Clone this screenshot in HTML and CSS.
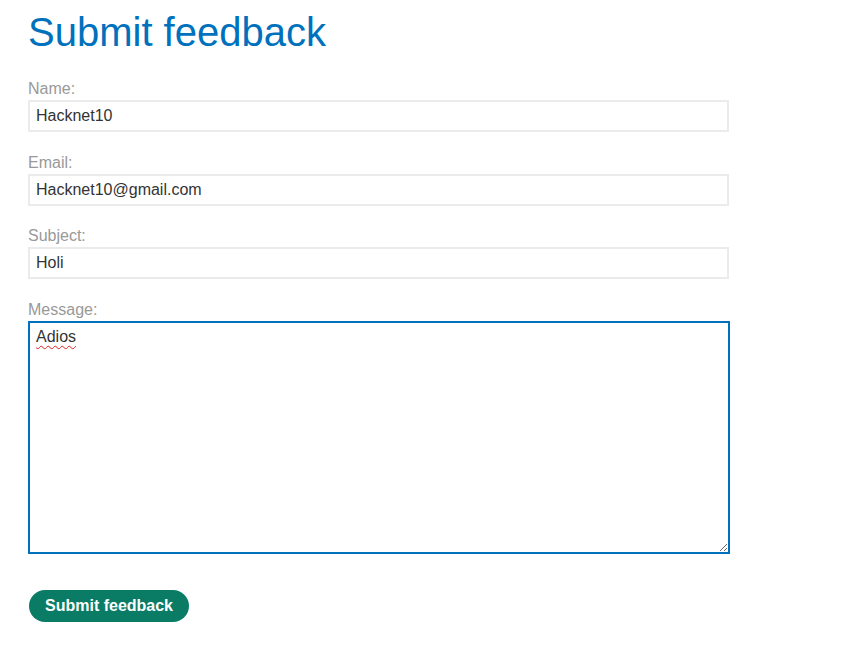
FILE: index.html
```html
<!DOCTYPE html>
<html lang="en">
<head>
    <meta charset="UTF-8">
    <meta name="viewport" content="width=device-width, initial-scale=1.0">
    <title>Submit feedback</title>
    <link rel="stylesheet" href="styles.css">
</head>
<body>

    <div class="container">
        <h1>Submit feedback</h1>
        <form class="feedback-form">
            <label for="name">Name:</label>
            <input type="text" id="name" value="Hacknet10">

            <label for="email">Email:</label>
            <input type="text" id="email" value="Hacknet10@gmail.com">

            <label for="subject">Subject:</label>
            <input type="text" id="subject" value="Holi">

            <label for="message">Message:</label>
            <textarea id="message" spellcheck="false">Adios</textarea>

            <button type="button" class="submit-btn">Submit feedback</button>
        </form>
    </div>

</body>
</html>
```

FILE: styles.css
```css
* {
    margin: 0;
    padding: 0;
    box-sizing: border-box;
    font-family: "Liberation Sans", Arial, sans-serif;
}

body {
    background: #ffffff;
    color: #333;
}

.container {
    padding: 8px 0 0 28px;
}

h1 {
    font-size: 40px;
    font-weight: normal;
    line-height: 48px;
    color: #0071bc;
    margin-bottom: 22px;
}

.feedback-form {
    display: flex;
    flex-direction: column;
    align-items: flex-start;
}

.feedback-form label {
    font-size: 16px;
    line-height: 22px;
    color: #999;
}

.feedback-form input {
    width: 701px;
    height: 32px;
    padding: 0 6px;
    border: 2px solid #ebebeb;
    font-size: 16px;
    color: #333;
    outline: none;
    margin-bottom: 19.5px;
}

.feedback-form textarea {
    width: 702px;
    height: 233px;
    padding: 5px 6px;
    border: 2px solid #0071bc;
    font-size: 16px;
    color: #333;
    outline: none;
    resize: both;
    text-decoration: underline wavy #e0201c;
    text-decoration-thickness: 1px;
    text-underline-offset: 3px;
}

.submit-btn {
    margin-top: 36px;
    margin-left: 1px;
    width: 160px;
    height: 32px;
    border: none;
    border-radius: 16px;
    background: #0a7c65;
    color: #fff;
    font-weight: bold;
    font-size: 16px;
    cursor: pointer;
}
```
